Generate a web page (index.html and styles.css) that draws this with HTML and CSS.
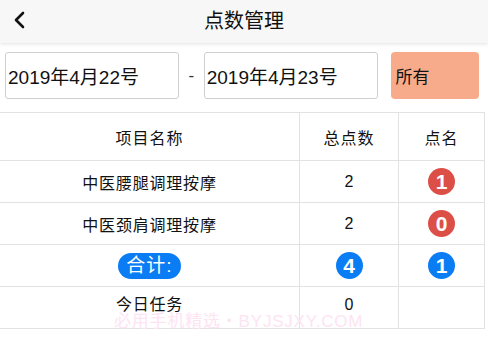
FILE: index.html
```html
<!DOCTYPE html>
<html lang="zh">
<head>
    <meta charset="UTF-8">
    <meta name="viewport" content="width=device-width, initial-scale=1.0">
    <title>点数管理</title>
    <link rel="stylesheet" href="styles.css">
</head>
<body>
    <div class="header">
        <svg class="back" width="14" height="18" viewBox="0 0 14 18">
            <path d="M11 2 L4 9 L11 16" fill="none" stroke="#111" stroke-width="2.6" stroke-linecap="round" stroke-linejoin="round"/>
        </svg>
        <h2>点数管理</h2>
    </div>

    <div class="filters">
        <div class="date-box">2019年4月22号</div>
        <span class="dash">-</span>
        <div class="date-box">2019年4月23号</div>
        <div class="all-btn">所有</div>
    </div>

    <table class="points">
        <thead>
            <tr>
                <th class="col-name">项目名称</th>
                <th class="col-total">总点数</th>
                <th class="col-call">点名</th>
            </tr>
        </thead>
        <tbody>
            <tr>
                <td class="name">中医腰腿调理按摩</td>
                <td>2</td>
                <td><span class="badge red">1</span></td>
            </tr>
            <tr>
                <td class="name">中医颈肩调理按摩</td>
                <td>2</td>
                <td><span class="badge red">0</span></td>
            </tr>
            <tr>
                <td><span class="pill">合计:</span></td>
                <td><span class="badge blue">4</span></td>
                <td><span class="badge blue">1</span></td>
            </tr>
            <tr class="last">
                <td class="name">今日任务</td>
                <td>0</td>
                <td></td>
            </tr>
        </tbody>
    </table>

    <div class="watermark">必用手机精选・BYJSJXY.COM</div>
</body>
</html>
```

FILE: styles.css
```css
body {
    margin: 0;
    font-family: "Liberation Sans", "Noto Sans CJK SC", sans-serif;
    background: #fff;
    color: #111;
    position: relative;
    height: 343px;
    overflow: hidden;
}
.header {
    height: 43px;
    background: #f7f7f7;
    box-shadow: 0 1px 4px rgba(0, 0, 0, 0.12);
    display: flex;
    align-items: center;
    justify-content: center;
    position: relative;
}
.header h2 {
    margin: 0;
    font-size: 20px;
    font-weight: normal;
    margin-top: -5px;
}
.back {
    position: absolute;
    left: 12px;
    top: 11px;
}
.filters {
    display: flex;
    align-items: center;
    padding: 9px 9px 0 5px;
}
.date-box {
    width: 171px;
    height: 45px;
    border: 1px solid #cfcfcf;
    border-radius: 3px;
    font-size: 19px;
    display: flex;
    align-items: center;
    padding-left: 2px;
    box-sizing: content-box;
}
.dash {
    width: 25px;
    text-align: center;
    font-size: 17px;
    color: #333;
}
.all-btn {
    margin-left: 13px;
    width: 84px;
    height: 47px;
    background: #f8ab8b;
    border-radius: 4px;
    font-size: 17px;
    display: flex;
    align-items: center;
    padding-left: 5px;
    box-sizing: content-box;
}
.points {
    margin-top: 13px;
    width: 485px;
    border-collapse: collapse;
}
.points th, .points td {
    border: 1px solid #e2e2e2;
    text-align: center;
    font-size: 16px;
    padding: 0;
}
.points th {
    height: 47px;
    font-weight: normal;
    letter-spacing: 1px;
}
.points td {
    height: 41px;
}
.points td.name {
    letter-spacing: 0.8px;
}
.points tr.last td {
    height: 32px;
    vertical-align: top;
    padding-top: 9px;
    line-height: 18px;
}
.points tr > :first-child {
    border-left: none;
}
.col-name { width: 299px; }
.col-total { width: 98px; }
.badge {
    display: inline-flex;
    align-items: center;
    justify-content: center;
    width: 27px;
    height: 27px;
    border-radius: 50%;
    color: #fff;
    font-weight: bold;
    font-size: 21px;
    vertical-align: middle;
}
.red { background: #dc4f47; }
.blue { background: #0a7df5; }
.pill {
    display: inline-block;
    background: #0a7df5;
    color: #fff;
    font-size: 19px;
    line-height: 26px;
    padding: 0 8px;
    border-radius: 13px;
    letter-spacing: 1px;
    vertical-align: middle;
}
.watermark {
    position: absolute;
    left: 114px;
    top: 315px;
    font-size: 17px;
    line-height: 14px;
    color: #fde4f3;
    letter-spacing: 0.8px;
    white-space: nowrap;
}
```
